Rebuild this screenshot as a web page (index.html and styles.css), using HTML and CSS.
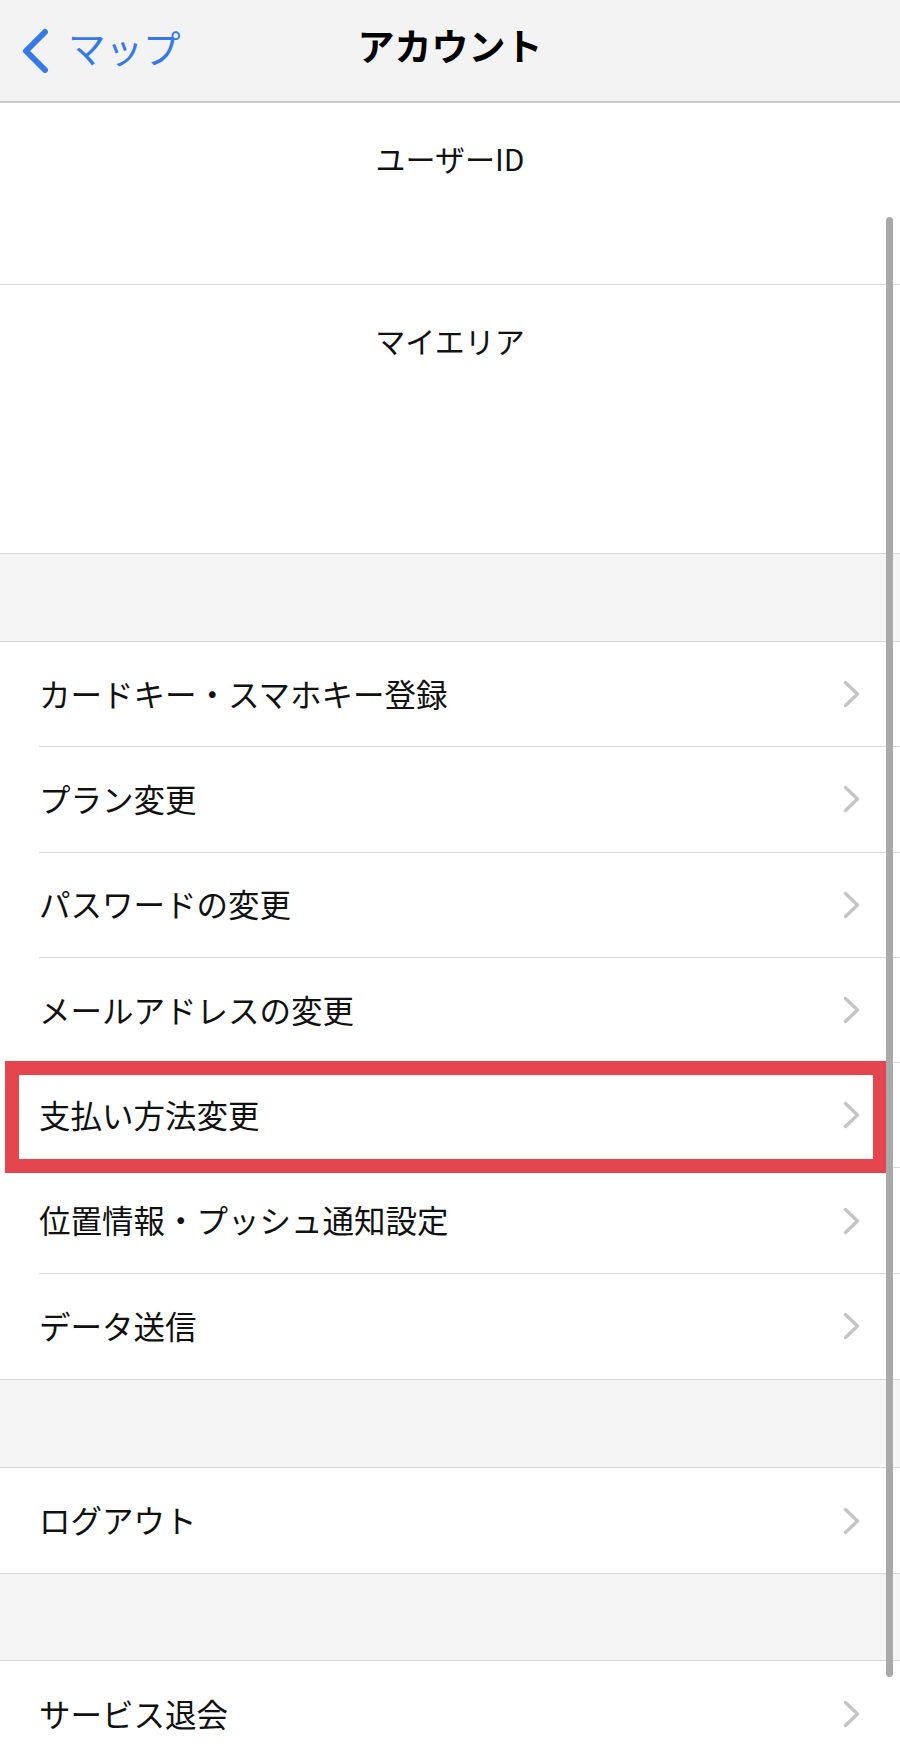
FILE: index.html
```html
<!DOCTYPE html>
<html lang="ja">
<head>
<meta charset="utf-8">
<title>アカウント</title>
<link rel="stylesheet" href="styles.css">
</head>
<body>
<header class="navbar">
  <div class="nav-back">
    <svg class="back-icon" width="28" height="46" viewBox="0 0 28 46"><polyline points="24,4 5,23 24,42" fill="none" stroke="#3579e8" stroke-width="6" stroke-linecap="round" stroke-linejoin="round"/></svg>
    <span class="back-label">マップ</span>
  </div>
  <h1 class="nav-title">アカウント</h1>
  <div class="nav-right"></div>
</header>

<section class="info info-id">
  <p class="info-label">ユーザーID</p>
</section>
<section class="info info-area">
  <p class="info-label">マイエリア</p>
</section>

<div class="band"></div>

<ul class="group">
  <li class="row"><div class="row-body"><span class="row-text">カードキー・スマホキー登録</span><svg class="chev" width="17" height="28" viewBox="0 0 17 28"><polyline points="2.5,2.5 14.5,14 2.5,25.5" fill="none" stroke="#c5c5c8" stroke-width="3.4" stroke-linecap="round" stroke-linejoin="round"/></svg></div></li>
  <li class="row"><div class="row-body"><span class="row-text">プラン変更</span><svg class="chev" width="17" height="28" viewBox="0 0 17 28"><polyline points="2.5,2.5 14.5,14 2.5,25.5" fill="none" stroke="#c5c5c8" stroke-width="3.4" stroke-linecap="round" stroke-linejoin="round"/></svg></div></li>
  <li class="row"><div class="row-body"><span class="row-text">パスワードの変更</span><svg class="chev" width="17" height="28" viewBox="0 0 17 28"><polyline points="2.5,2.5 14.5,14 2.5,25.5" fill="none" stroke="#c5c5c8" stroke-width="3.4" stroke-linecap="round" stroke-linejoin="round"/></svg></div></li>
  <li class="row"><div class="row-body"><span class="row-text">メールアドレスの変更</span><svg class="chev" width="17" height="28" viewBox="0 0 17 28"><polyline points="2.5,2.5 14.5,14 2.5,25.5" fill="none" stroke="#c5c5c8" stroke-width="3.4" stroke-linecap="round" stroke-linejoin="round"/></svg></div></li>
  <li class="row row-highlight"><div class="row-body"><span class="row-text">支払い方法変更</span><svg class="chev" width="17" height="28" viewBox="0 0 17 28"><polyline points="2.5,2.5 14.5,14 2.5,25.5" fill="none" stroke="#c5c5c8" stroke-width="3.4" stroke-linecap="round" stroke-linejoin="round"/></svg></div><div class="highlight-box"></div></li>
  <li class="row"><div class="row-body"><span class="row-text">位置情報・プッシュ通知設定</span><svg class="chev" width="17" height="28" viewBox="0 0 17 28"><polyline points="2.5,2.5 14.5,14 2.5,25.5" fill="none" stroke="#c5c5c8" stroke-width="3.4" stroke-linecap="round" stroke-linejoin="round"/></svg></div></li>
  <li class="row"><div class="row-body"><span class="row-text">データ送信</span><svg class="chev" width="17" height="28" viewBox="0 0 17 28"><polyline points="2.5,2.5 14.5,14 2.5,25.5" fill="none" stroke="#c5c5c8" stroke-width="3.4" stroke-linecap="round" stroke-linejoin="round"/></svg></div></li>
</ul>

<div class="band"></div>

<ul class="group">
  <li class="row"><div class="row-body"><span class="row-text">ログアウト</span><svg class="chev" width="17" height="28" viewBox="0 0 17 28"><polyline points="2.5,2.5 14.5,14 2.5,25.5" fill="none" stroke="#c5c5c8" stroke-width="3.4" stroke-linecap="round" stroke-linejoin="round"/></svg></div></li>
</ul>

<div class="band band-short"></div>

<ul class="group group-last">
  <li class="row"><div class="row-body"><span class="row-text">サービス退会</span><svg class="chev" width="17" height="28" viewBox="0 0 17 28"><polyline points="2.5,2.5 14.5,14 2.5,25.5" fill="none" stroke="#c5c5c8" stroke-width="3.4" stroke-linecap="round" stroke-linejoin="round"/></svg></div></li>
</ul>

<div class="scroll-indicator"></div>
</body>
</html>
```

FILE: styles.css
```css
* {
  box-sizing: border-box;
}

html, body {
  margin: 0;
  padding: 0;
  overflow: hidden;
}

body {
  position: relative;
  width: 900px;
  height: 1764px;
  background: #ffffff;
  font-family: "Noto Sans CJK JP", "Noto Sans", sans-serif;
  color: #111111;
}

.navbar {
  display: grid;
  grid-template-columns: 1fr auto 1fr;
  align-items: center;
  height: 103px;
  background: #f3f3f3;
  border-bottom: 2px solid #c9c9c9;
}

.nav-back {
  display: flex;
  align-items: center;
  gap: 19px;
  padding-left: 21px;
  padding-top: 1px;
}

.back-icon {
  display: block;
}

.back-label {
  font-size: 37.5px;
  color: #3579e8;
  line-height: 1;
  margin-top: -9px;
}

.nav-title {
  margin: 0;
  font-size: 37px;
  font-weight: 700;
  line-height: 1;
  color: #000000;
  margin-top: -10px;
}

.info {
  display: flex;
  flex-direction: column;
  align-items: center;
  border-bottom: 1px solid #d7d7d7;
}

.info-id {
  height: 182px;
}

.info-area {
  height: 269px;
}

.info-label {
  margin: 0;
  padding-top: 35px;
  font-size: 30px;
  line-height: 40px;
  color: #111111;
}

.band {
  height: 88px;
  background: #f5f5f5;
  border-bottom: 1px solid #d7d7d7;
}

.band-short {
  height: 87px;
}

.group {
  list-style: none;
  margin: 0;
  padding: 0;
  border-bottom: 1px solid #d7d7d7;
}

.group-last {
  border-bottom: none;
}

.row {
  position: relative;
  height: 105.3px;
  padding-left: 39px;
}

.row-body {
  display: flex;
  align-items: center;
  justify-content: space-between;
  height: 100%;
  padding-right: 40px;
  border-bottom: 1px solid #d7d7d7;
}

.row:last-child .row-body {
  border-bottom: none;
}

.row-text {
  font-size: 31.5px;
  color: #111111;
  margin-top: -3px;
}

.chev {
  display: block;
  flex: none;
}

.highlight-box {
  position: absolute;
  left: 5px;
  right: 13px;
  top: -2px;
  bottom: -5px;
  border: 14px solid #e5454e;
}

.scroll-indicator {
  position: absolute;
  top: 217px;
  left: 886px;
  width: 7px;
  height: 1460px;
  border-radius: 4px;
  background: #a9a9a9;
}
```
